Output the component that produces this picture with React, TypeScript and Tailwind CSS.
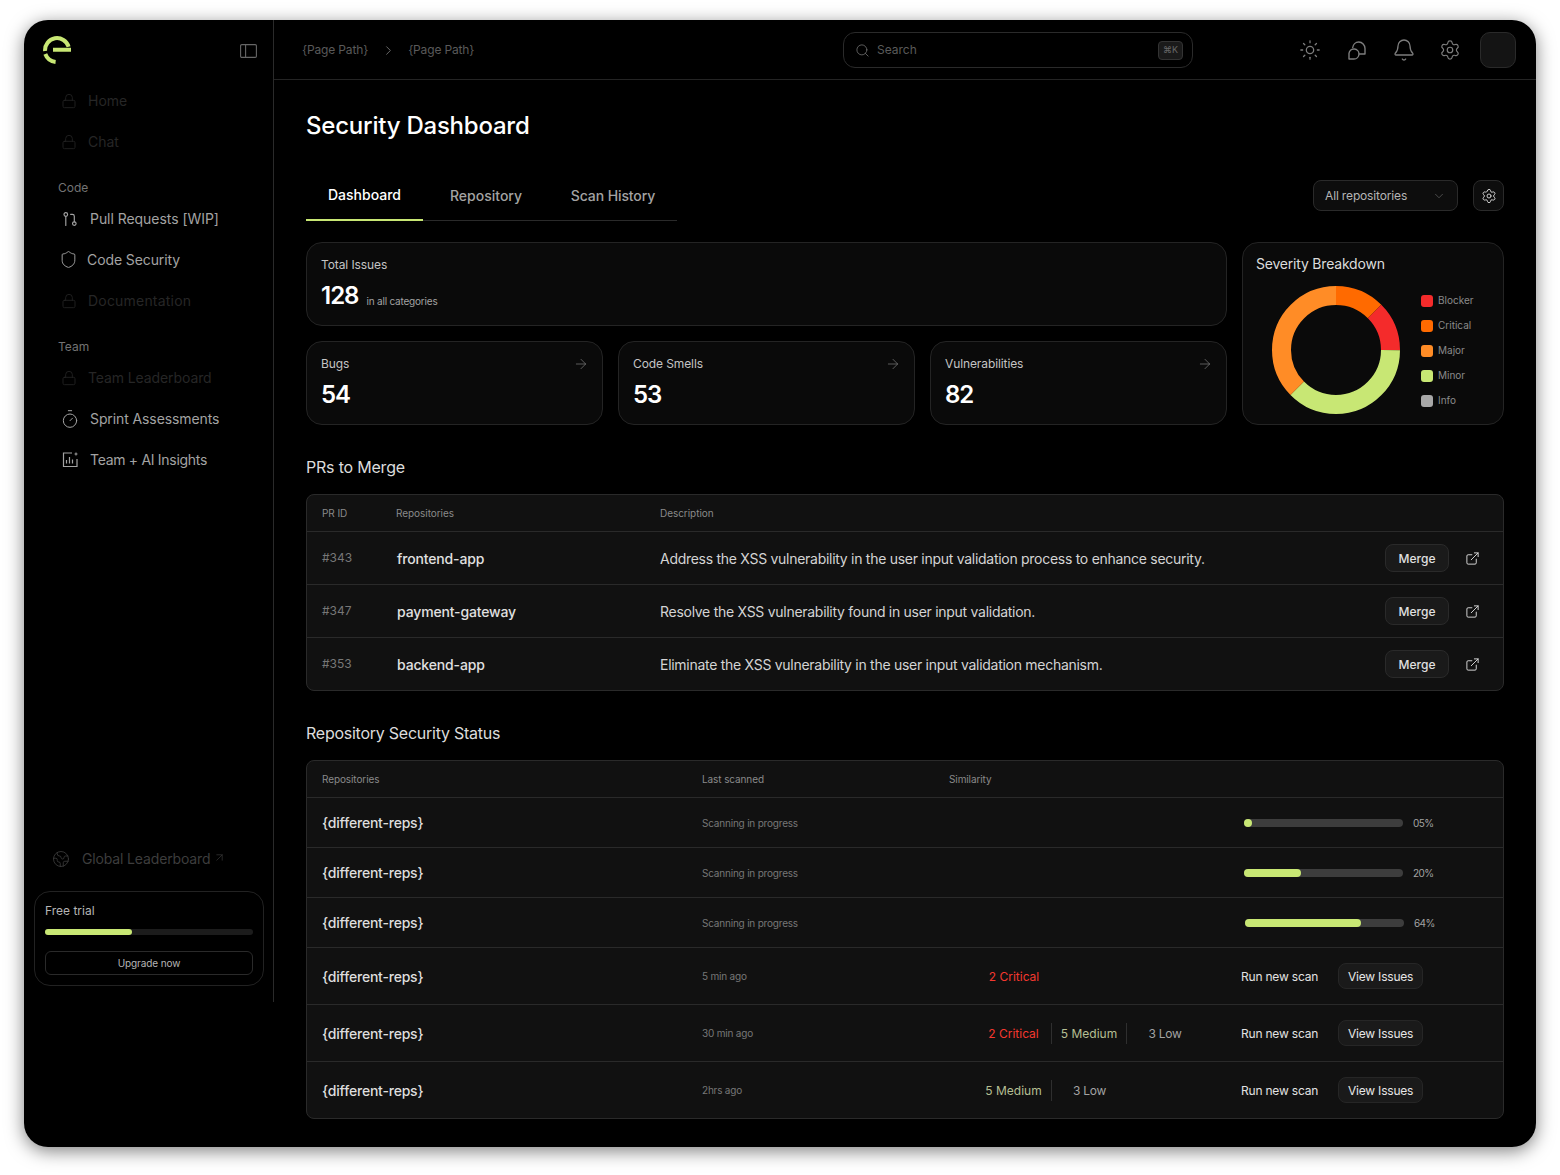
import { ReactNode } from 'react'
import {
  ArrowRight,
  ArrowUpRight,
  Bell,
  ChevronDown,
  ChevronRight,
  Earth,
  ExternalLink,
  Lock,
  Search,
  Settings,
  Shield,
  Sun,
  Timer,
} from 'lucide-react'

const PullIcon = () => (
  <svg width="14" height="14" viewBox="0 0 14 14" fill="none" stroke="currentColor" strokeWidth="1.15">
    <circle cx="2.8" cy="2.4" r="1.8" />
    <path d="M2.8 4.2V13.5" strokeLinecap="round" />
    <circle cx="11.3" cy="11.6" r="1.8" />
    <path d="M11.3 9.8V4.2c0-1.2-.7-1.9-1.9-1.9H7.6" strokeLinecap="round" />
  </svg>
)

const InsightIcon = () => (
  <svg width="17" height="17" viewBox="0 0 17 17" fill="none" stroke="currentColor" strokeWidth="1.2">
    <path d="M10 2H1.5v13.5H15V8" />
    <path d="M4.5 12.5V9M7.5 12.5V6M10.5 12.5V8.5" />
    <path d="M14 .8l.6 1.6 1.6.6-1.6.6-.6 1.6-.6-1.6-1.6-.6 1.6-.6z" fill="currentColor" stroke="none" />
  </svg>
)

const ChatIcon = () => (
  <svg width="22" height="22" viewBox="0 0 22 22" fill="none" stroke="currentColor" strokeWidth="1.4">
    <path d="M6.6 9C7 5.4 9.6 3 12.8 3c3.4 0 6.2 2.9 6.2 6.5V15h-6" strokeLinejoin="round" />
    <path d="M3 20v-5.6a5 5 0 1 1 5 5.6z" strokeLinejoin="round" />
  </svg>
)

const PanelIcon = () => (
  <svg width="17" height="14" viewBox="0 0 17 14" fill="none" stroke="#666" strokeWidth="1.1">
    <rect x="0.6" y="0.6" width="15.8" height="12.8" rx="1.2" />
    <path d="M5.6 .6v12.8" />
  </svg>
)

const Logo = () => (
  <svg width="28" height="28" viewBox="0 0 28 28" fill="none" stroke="#c8e774">
    <path d="M2.1 15A12 12 0 0 1 25.6 10.8" strokeWidth="4" />
    <path d="M10 13.7h18" strokeWidth="4" />
    <path d="M2.3 18A12.4 12.4 0 0 0 12.6 26" strokeWidth="4" />
  </svg>
)

type NavProps = {
  icon: ReactNode
  label: string
  locked?: boolean
  cls: string
}

const NavItem = ({ icon, label, locked, cls }: NavProps) => (
  <div className={`flex h-[41px] items-center text-sm ${cls} ${locked ? 'text-[#262626]' : 'text-[#a3a3a3]'}`}>
    {icon}
    <span>{label}</span>
  </div>
)

const lock = <Lock size={16} strokeWidth={1.2} className="-ml-[1px]" />

const Sidebar = () => (
  <aside className="flex h-[982px] w-[250px] shrink-0 flex-col border-r border-[#2a2a2a]">
    <div className="flex h-[60px] items-center justify-between pl-[19px] pr-[16px]">
      <Logo />
      <span className="mt-[2px]">
        <PanelIcon />
      </span>
    </div>
    <NavItem icon={lock} label="Home" locked cls="gap-[11px] pl-[38px]" />
    <NavItem icon={lock} label="Chat" locked cls="gap-[11px] pl-[38px]" />
    <div className="mb-[2px] mt-[18px] h-4 pl-[34px] text-xs leading-4 text-[#737373]">Code</div>
    <NavItem icon={<PullIcon />} label="Pull Requests [WIP]" cls="gap-[13px] pl-[39px] tracking-[-0.05px]" />
    <NavItem icon={<Shield size={19} strokeWidth={1.2} className="-ml-[3px]" />} label="Code Security" cls="gap-[9px] pl-[38px] tracking-[-0.1px]" />
    <NavItem icon={lock} label="Documentation" locked cls="gap-[11px] pl-[38px] tracking-[0.2px]" />
    <div className="mb-[2px] mt-[18px] h-4 pl-[34px] text-xs leading-4 text-[#737373]">Team</div>
    <NavItem icon={lock} label="Team Leaderboard" locked cls="gap-[11px] pl-[38px] tracking-[-0.1px]" />
    <NavItem icon={<Timer size={20} strokeWidth={1.2} className="-ml-[2px]" />} label="Sprint Assessments" cls="gap-[10px] pl-[38px] tracking-[-0.1px]" />
    <NavItem icon={<InsightIcon />} label="Team + AI Insights" cls="gap-[11px] pl-[38px] tracking-[-0.3px]" />
    <div className="mb-[22px] mt-auto flex items-center pl-[28px] text-sm tracking-[-0.15px] text-[#3d3d3d]">
      <Earth size={18} strokeWidth={1.1} />
      <span className="ml-[12px]">Global Leaderboard</span>
      <ArrowUpRight size={13} strokeWidth={1.2} className="-mt-[3px] ml-[3px]" />
    </div>
    <div className="mb-4 ml-[10px] mr-[9px] rounded-2xl border border-[#222] p-[10px]">
      <div className="text-xs leading-[18px] text-[#b5b5b5]">Free trial</div>
      <div className="mt-[9px] h-[6px] rounded-full bg-[#1c1c1c]">
        <div className="h-full w-[42%] rounded-full bg-[#c8e774]" />
      </div>
      <div className="mt-4 flex h-6 items-center justify-center rounded-md border border-[#2a2a2a] text-[10px] tracking-[-0.1px] text-[#b5b5b5]">
        Upgrade now
      </div>
    </div>
  </aside>
)

const Header = () => (
  <header className="flex h-[60px] items-center border-b border-[#242424] pl-[28px] pr-[20px] pt-[1px]">
    <div className="flex w-[541px] items-center text-xs tracking-[-0.15px] text-[#5a5a5a]">
      <span>{'{Page Path}'}</span>
      <ChevronRight size={15} strokeWidth={1.4} className="ml-[13px] mr-[12px] text-[#777]" />
      <span>{'{Page Path}'}</span>
    </div>
    <div className="flex h-[36px] w-[350px] items-center rounded-xl border border-[#2a2a2a] pl-[11px] pr-[9px]">
      <Search size={15} strokeWidth={1.2} className="text-[#7a7a7a]" />
      <span className="ml-[7px] text-xs text-[#5a5a5a]">Search</span>
      <span className="ml-auto flex h-[19px] w-[25px] items-center justify-center rounded border border-[#333] bg-[#1a1a1a] text-[9px] text-[#666]">
        ⌘K
      </span>
    </div>
    <div className="ml-auto flex items-center text-[#7d7d7d]">
      <Sun size={22} strokeWidth={1.4} />
      <span className="ml-[25px]">
        <ChatIcon />
      </span>
      <Bell size={24} strokeWidth={1.3} className="ml-[24px]" />
      <Settings size={22} strokeWidth={1.3} className="ml-[23px]" />
      <div className="ml-[19px] h-[36px] w-[36px] rounded-[10px] border border-[#2a2a2a] bg-[#141414]" />
    </div>
  </header>
)

const tabs = [
  { label: 'Dashboard', cls: 'w-[117px] border-b-2 border-[#c8e774] text-white' },
  { label: 'Repository', cls: 'w-[126px] text-[#a3a3a3]' },
  { label: 'Scan History', cls: 'w-[128px] text-[#a3a3a3] tracking-[-0.1px]' },
]

const Tabs = () => (
  <div className="flex items-start justify-between">
    <div className="flex h-[51px] border-b border-[#2a2a2a]">
      {tabs.map((t) => (
        <div key={t.label} className={`flex h-[51px] items-center justify-center text-sm font-medium ${t.cls}`}>
          {t.label}
        </div>
      ))}
    </div>
    <div className="mt-[10px] flex gap-[15px]">
      <div className="flex h-[31px] w-[145px] items-center justify-between rounded-lg border border-[#2a2a2a] bg-[#0d0d0d] px-[11px] text-xs tracking-[-0.15px] text-[#b5b5b5]">
        All repositories
        <ChevronDown size={14} strokeWidth={1.2} className="text-[#666]" />
      </div>
      <div className="flex h-[31px] w-[31px] items-center justify-center rounded-lg border border-[#2a2a2a] bg-[#0d0d0d] text-[#d8d8d8]">
        <Settings size={16} strokeWidth={1.4} />
      </div>
    </div>
  </div>
)

const StatCard = ({ label, value }: { label: string; value: string }) => (
  <div className="h-[84px] flex-1 rounded-2xl border border-[#242424] bg-[#0a0a0a] px-[14px] pt-[13px]">
    <div className="flex items-center justify-between text-xs leading-[18px] tracking-[-0.1px] text-[#c4c4c4]">
      {label}
      <ArrowRight size={16} strokeWidth={1.1} className="-mr-[1px] text-[#7a7a7a]" />
    </div>
    <div className="mt-[6px] text-2xl font-semibold leading-8 tracking-[-1px] text-white">{value}</div>
  </div>
)

const legend = [
  { label: 'Blocker', cls: 'bg-[#f42b2b]' },
  { label: 'Critical', cls: 'bg-[#ff6a00]' },
  { label: 'Major', cls: 'bg-[#ff8c26]' },
  { label: 'Minor', cls: 'bg-[#c8e774]' },
  { label: 'Info', cls: 'bg-[#a8a8a8]' },
]

const Donut = () => {
  const r = 54.5
  const c = 2 * Math.PI * r
  const segs = [
    { color: '#ff6a00', start: 0, size: 45 },
    { color: '#f42b2b', start: 45, size: 45 },
    { color: '#c8e774', start: 90, size: 135 },
    { color: '#ff8c26', start: 225, size: 135 },
  ]
  return (
    <svg width="128" height="128" viewBox="0 0 128 128" className="-rotate-90">
      {segs.map((s) => (
        <circle
          key={s.color}
          cx="64"
          cy="64"
          r={r}
          fill="none"
          stroke={s.color}
          strokeWidth="19"
          strokeDasharray={`${(s.size / 360) * c} ${c}`}
          strokeDashoffset={-(s.start / 360) * c}
        />
      ))}
    </svg>
  )
}

const Severity = () => (
  <div className="h-[183px] w-[262px] shrink-0 rounded-2xl border border-[#242424] bg-[#0a0a0a] pl-[13px] pt-[11px]">
    <div className="text-sm leading-5 tracking-[-0.2px] text-[#dcdcdc]">Severity Breakdown</div>
    <div className="mt-[12px] flex">
      <div className="ml-[16px]">
        <Donut />
      </div>
      <div className="ml-[21px] mt-[8px] flex flex-col gap-[12px]">
        {legend.map((l) => (
          <div key={l.label} className="flex h-[13px] items-center gap-[5px] text-[10px] text-[#8a8a8a]">
            <span className={`h-3 w-3 rounded-[3px] ${l.cls}`} />
            {l.label}
          </div>
        ))}
      </div>
    </div>
  </div>
)

const prs = [
  { id: '#343', repo: 'frontend-app', desc: 'Address the XSS vulnerability in the user input validation process to enhance security.' },
  { id: '#347', repo: 'payment-gateway', desc: 'Resolve the XSS vulnerability found in user input validation.' },
  { id: '#353', repo: 'backend-app', desc: 'Eliminate the XSS vulnerability in the user input validation mechanism.' },
]

const PrTable = () => (
  <div className="rounded-lg border border-[#2a2a2a] bg-[#111]">
    <div className="flex h-[36px] items-center pl-[15px] text-[10px] tracking-[-0.05px] text-[#8a8a8a]">
      <span className="w-[74px]">PR ID</span>
      <span className="w-[264px]">Repositories</span>
      <span>Description</span>
    </div>
    {prs.map((p) => (
      <div key={p.id} className="flex h-[53px] items-center border-t border-[#2a2a2a] pl-[15px] pr-[23px]">
        <span className="w-[75px] text-xs text-[#777]">{p.id}</span>
        <span className="w-[263px] pt-[1px] text-sm font-medium tracking-[-0.15px] text-[#e0e0e0]">{p.repo}</span>
        <span className="pt-[1px] text-sm tracking-[-0.28px] text-[#d4d4d4]">{p.desc}</span>
        <div className="ml-auto flex h-7 w-[64px] items-center justify-center rounded-lg border border-[#2a2a2a] bg-[#1a1a1a] pt-[1px] text-xs font-medium text-[#e0e0e0]">
          Merge
        </div>
        <ExternalLink size={15} strokeWidth={1.5} className="ml-[16px] text-[#dcdcdc]" />
      </div>
    ))}
  </div>
)

const progressRows = [
  { when: 'Scanning in progress', pct: '05%', width: 'w-[5%]', end: 'mr-[70px]' },
  { when: 'Scanning in progress', pct: '20%', width: 'w-[36%]', end: 'mr-[70px]' },
  { when: 'Scanning in progress', pct: '64%', width: 'w-[73%]', end: 'mr-[69px]' },
]

const issueRows = [
  { when: '5 min ago', first: '2 Critical', firstCls: 'text-[#f4382f]', medium: false, low: false },
  { when: '30 min ago', first: '2 Critical', firstCls: 'text-[#f4382f]', medium: true, low: true },
  { when: '2hrs ago', first: '5 Medium', firstCls: 'text-[#b5bf93]', medium: false, low: true },
]

const RepoName = () => (
  <span className="w-[380px] pt-[1px] text-sm font-medium tracking-[-0.2px] text-[#dedede]">{'{different-reps}'}</span>
)

const RepoTable = () => (
  <div className="rounded-lg border border-[#2a2a2a] bg-[#111]">
    <div className="flex h-[36px] items-center pl-[15px] text-[10px] tracking-[-0.1px] text-[#8a8a8a]">
      <span className="w-[380px]">Repositories</span>
      <span className="w-[247px]">Last scanned</span>
      <span>Similarity</span>
    </div>
    {progressRows.map((r) => (
      <div key={r.pct} className="flex h-[50px] items-center border-t border-[#2a2a2a] pl-[15px]">
        <RepoName />
        <span className="pt-[1px] text-[10px] tracking-[-0.2px] text-[#777]">{r.when}</span>
        <div className={`ml-auto flex items-center ${r.end}`}>
          <div className="h-2 w-[159px] rounded-full bg-[#3d3d3d]">
            <div className={`h-full rounded-full bg-[#c8e774] ${r.width}`} />
          </div>
          <span className="ml-[10px] w-[20px] whitespace-nowrap pt-[1px] text-[10px] tracking-[-0.6px] text-[#a3a3a3]">{r.pct}</span>
        </div>
      </div>
    ))}
    {issueRows.map((r) => (
      <div key={r.when} className="flex h-[57px] items-center border-t border-[#2a2a2a] pl-[15px]">
        <RepoName />
        <span className="w-[275px] pt-[1px] text-[10px] tracking-[-0.2px] text-[#777]">{r.when}</span>
        <div className="grid w-[226px] grid-cols-[75px_75px_76px] text-center text-xs">
          <span className={`h-[21px] pr-[1px] leading-[21px] ${r.firstCls} ${r.low ? 'border-r border-[#2f2f2f]' : ''}`}>{r.first}</span>
          {r.medium && <span className="h-[21px] border-r border-[#2f2f2f] leading-[21px] text-[#b5bf93]">5 Medium</span>}
          {r.low && <span className="h-[21px] leading-[21px] tracking-[-0.3px] text-[#a3a3a3]">3 Low</span>}
        </div>
        <span className="ml-[38px] pt-[1px] text-xs tracking-[-0.2px] text-[#e2e2e2]">Run new scan</span>
        <div className="ml-[20px] flex h-[26px] w-[85px] items-center justify-center rounded-lg border border-[#262626] bg-[#1a1a1a] pt-[1px] text-xs tracking-[-0.2px] text-[#e6e6e6]">
          View Issues
        </div>
      </div>
    ))}
  </div>
)

export default function App() {
  return (
    <div className="min-h-[1175px] bg-white px-6 pt-5 font-[Inter,sans-serif]">
      <div className="flex h-[1127px] overflow-hidden rounded-3xl bg-black shadow-[0_4px_18px_rgba(0,0,0,0.5)]">
        <Sidebar />
        <main className="min-w-0 flex-1">
          <Header />
          <div className="px-[32px]">
            <h1 className="mt-[31px] text-2xl font-medium leading-[30px] tracking-[-0.22px] text-white">Security Dashboard</h1>
            <div className="mt-[29px]">
              <Tabs />
            </div>
            <div className="mt-[21px] flex gap-[15px]">
              <div className="flex flex-1 flex-col gap-[15px]">
                <div className="h-[84px] rounded-2xl border border-[#242424] bg-[#0a0a0a] px-[14px] pt-[13px]">
                  <div className="text-xs leading-[18px] tracking-[-0.1px] text-[#c4c4c4]">Total Issues</div>
                  <div className="mt-[6px] flex items-end gap-2">
                    <span className="text-2xl font-semibold leading-8 tracking-[-1px] text-white">128</span>
                    <span className="pb-[3px] text-[10px] tracking-[-0.2px] text-[#a3a3a3]">in all categories</span>
                  </div>
                </div>
                <div className="flex gap-[15px]">
                  <StatCard label="Bugs" value="54" />
                  <StatCard label="Code Smells" value="53" />
                  <StatCard label="Vulnerabilities" value="82" />
                </div>
              </div>
              <Severity />
            </div>
            <h2 className="mt-[30px] text-base leading-6 tracking-[-0.2px] text-[#dcdcdc]">PRs to Merge</h2>
            <div className="mt-[15px]">
              <PrTable />
            </div>
            <h2 className="mt-[30px] text-base leading-6 tracking-[-0.25px] text-[#dcdcdc]">Repository Security Status</h2>
            <div className="mt-[15px]">
              <RepoTable />
            </div>
          </div>
        </main>
      </div>
    </div>
  )
}
